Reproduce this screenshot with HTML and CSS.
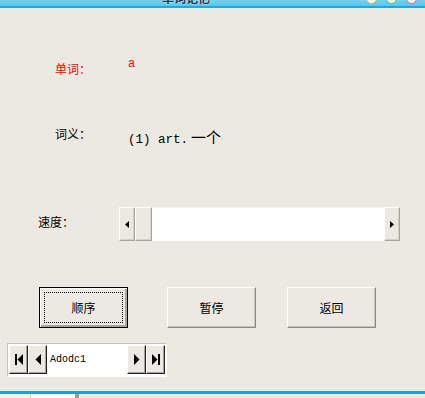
FILE: index.html
```html
<!DOCTYPE html>
<html lang="zh-CN">
<head>
  <meta charset="UTF-8">
  <title>单词记忆</title>
  <link rel="stylesheet" href="styles.css">
</head>
<body>
  <!-- 窗口标题栏（只露出底部） -->
  <div class="titlebar">
    <span class="title">单词记忆</span>
    <div class="caps">
      <span class="cap cap-min"></span>
      <span class="cap cap-max"></span>
      <span class="cap cap-close"></span>
    </div>
  </div>

  <div class="form">
    <div class="row row-word">
      <span class="label red">单词：</span>
      <span class="word">a</span>
    </div>

    <div class="row row-mean">
      <span class="label">词义：</span>
      <span class="mean"><span class="latin">(1) art.</span>一个</span>
    </div>

    <div class="row row-speed">
      <span class="label">速度：</span>
      <div class="hscroll">
        <div class="sb-btn">
          <svg width="4" height="7" viewBox="0 0 4 7"><path d="M4 0V7L0 3.5Z" fill="#000"/></svg>
        </div>
        <div class="sb-btn sb-thumb"></div>
        <div class="sb-track"></div>
        <div class="sb-btn">
          <svg width="4" height="7" viewBox="0 0 4 7"><path d="M0 0V7L4 3.5Z" fill="#000"/></svg>
        </div>
      </div>
    </div>

    <div class="row row-buttons">
      <button class="btn btn-default"><span class="focus">顺序</span></button>
      <button class="btn btn-pause">暂停</button>
      <button class="btn btn-back">返回</button>
    </div>

    <div class="row row-ado">
      <div class="adodc">
        <div class="ado-btn">
          <svg width="8" height="11" viewBox="0 0 8 11"><rect x="0" y="0" width="2" height="11" fill="#000"/><path d="M8 0V11L2.5 5.5Z" fill="#000"/></svg>
        </div>
        <div class="ado-btn">
          <svg width="6" height="11" viewBox="0 0 6 11"><path d="M6 0V11L0.5 5.5Z" fill="#000"/></svg>
        </div>
        <div class="ado-caption">Adodc1</div>
        <div class="ado-btn">
          <svg width="6" height="11" viewBox="0 0 6 11"><path d="M0 0V11L5.5 5.5Z" fill="#000"/></svg>
        </div>
        <div class="ado-btn">
          <svg width="8" height="11" viewBox="0 0 8 11"><path d="M0 0V11L5.5 5.5Z" fill="#000"/><rect x="6" y="0" width="2" height="11" fill="#000"/></svg>
        </div>
      </div>
    </div>
  </div>

  <!-- 任务栏顶边 -->
  <div class="taskbar">
    <span class="tb-a"></span>
    <span class="tb-b"></span>
    <span class="tb-c"></span>
  </div>
</body>
</html>
```

FILE: styles.css
```css
/* Reset básico */
* {
  box-sizing: border-box;
  margin: 0;
  padding: 0;
}

body {
  width: 425px;
  height: 398px;
  overflow: hidden;
  background: #ece9e2;
  font-family: "Noto Sans CJK SC", "Liberation Sans", sans-serif;
  font-size: 12px;
  color: #000;
  display: flex;
  flex-direction: column;
}

/* Barra de título */
.titlebar {
  height: 8px;
  flex: none;
  background: linear-gradient(#74d0ee, #5cc5e9);
  border-bottom: 2px solid #24a6d6;
  display: flex;
  overflow: hidden;
  position: relative;
}

.title {
  margin-left: 162px;
  margin-top: -8px;
  font-size: 12px;
  line-height: 12px;
  font-weight: bold;
  color: #1d3a4a;
  text-shadow: 0 0 2px #fff;
}

.caps {
  margin-left: auto;
  margin-right: 8px;
  margin-top: -7px;
  display: flex;
  gap: 9px;
}

.cap {
  width: 11px;
  height: 11px;
  border-radius: 50%;
  background: #e9f7fb;
  border: 1px solid;
}
.cap-min { border-color: #e8b84a; }
.cap-max { border-color: #5cc25c; }
.cap-close { border-color: #e0608a; }

.form {
  flex: 1;
  display: flex;
  flex-direction: column;
}

.row {
  display: flex;
  align-items: flex-start;
}

.label {
  line-height: 12px;
  white-space: nowrap;
}

.red { color: #f00; }

/* Linha: palavra */
.row-word {
  margin-top: 55px;
  padding-left: 55px;
  height: 12px;
}
.row-word .label { width: 73px; }
.word {
  color: #f00;
  font-family: "Liberation Mono", monospace;
  font-size: 12px;
  line-height: 12px;
  margin-top: -5px;
}

/* Linha: significado */
.row-mean {
  margin-top: 53px;
  padding-left: 55px;
  height: 16px;
}
.row-mean .label { width: 73px; }
.mean {
  font-size: 15px;
  line-height: 15px;
  margin-top: 1px;
  white-space: nowrap;
}
.latin {
  font-family: "Liberation Mono", monospace;
  font-size: 12.5px;
  margin-right: 3px;
}

/* Linha: velocidade */
.row-speed {
  margin-top: 63px;
  padding-left: 38px;
  height: 34px;
}
.row-speed .label {
  width: 81px;
  margin-top: 9px;
}

.hscroll {
  width: 281px;
  height: 34px;
  display: flex;
}

.sb-btn {
  width: 16px;
  height: 34px;
  flex: none;
  background: #ece9e2;
  border-top: 1px solid #fff;
  border-left: 1px solid #fff;
  border-right: 1px solid #a8a59c;
  border-bottom: 1px solid #a8a59c;
  box-shadow: inset -1px -1px #d4d0c8;
  display: flex;
  align-items: center;
  justify-content: center;
}

.sb-thumb { width: 17px; }

.sb-track {
  flex: 1;
  background: #fff;
  border-top: 1px solid #f4f3ef;
}

/* Linha: botões */
.row-buttons {
  margin-top: 46px;
  padding-left: 39px;
  height: 41px;
}

.btn {
  width: 89px;
  height: 41px;
  background: #ece9e2;
  font-family: "Noto Sans CJK SC", sans-serif;
  font-size: 12px;
  color: #000;
  border-top: 1px solid #fff;
  border-left: 1px solid #fff;
  border-right: 1px solid #8e8b83;
  border-bottom: 1px solid #8e8b83;
  box-shadow: inset -1px -1px #c8c4ba;
  display: flex;
  align-items: center;
  justify-content: center;
}

.btn-default {
  border: 1px solid #000;
  box-shadow: inset 1px 1px #fff, inset -2px -2px #a8a59c;
  padding: 4px;
}

.focus {
  flex: 1;
  align-self: stretch;
  border: 1px dotted #000;
  display: flex;
  align-items: center;
  justify-content: center;
}

.btn-pause { margin-left: 39px; }
.btn-back { margin-left: 31px; }

/* Controle Adodc */
.row-ado {
  margin-top: 15px;
  padding-left: 7px;
}

.adodc {
  width: 160px;
  height: 34px;
  display: flex;
  padding: 1px 1px 2px 1px;
  border-top: 1px solid #c4c1b8;
  border-left: 1px solid #c4c1b8;
  border-right: 1px solid #fff;
  border-bottom: 1px solid #fff;
  background: #fff;
}

.ado-btn {
  width: 19px;
  flex: none;
  background: #ece9e2;
  border-top: 1px solid #fff;
  border-left: 1px solid #fff;
  border-right: 1px solid #222;
  border-bottom: 1px solid #222;
  box-shadow: inset -1px -1px #a8a59c;
  display: flex;
  align-items: center;
  justify-content: center;
}

.ado-caption {
  flex: 1;
  background: #fff;
  font-family: "Liberation Mono", monospace;
  font-size: 10px;
  line-height: 12px;
  padding-left: 3px;
  padding-top: 9px;
}

/* Barra de tarefas */
.taskbar {
  flex: none;
  height: 7px;
  border-top: 3px solid #1ba2d2;
  display: flex;
  background: #ece9e2;
}
.tb-a { width: 31px; background: #f2f2f0; border-right: 1px solid #c8d8c0; }
.tb-b { width: 44px; background: #fff; }
.tb-c { width: 4px; background: #9a9a9a; }
```
